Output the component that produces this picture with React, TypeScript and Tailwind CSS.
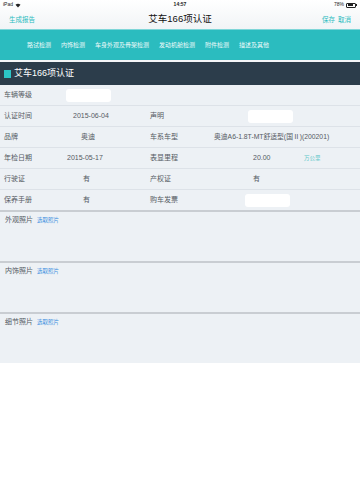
const tabs = ['路试检测', '内饰检测', '车身外观及骨架检测', '发动机舱检测', '附件检测', '描述及其他'];

const Input = ({ className = '' }: { className?: string }) => (
  <div className={`h-[13px] w-[45px] rounded-[3px] bg-white ${className}`} />
);

const Row = ({ children, last }: { children: React.ReactNode; last?: boolean }) => (
  <div className={`flex items-center pt-[1px] text-[7px] text-[#555b63] ${last ? 'h-[20px]' : 'h-[21px] border-b border-[#dde2e8]'}`}>{children}</div>
);

const Photo = ({ label }: { label: string }) => (
  <>
    <div className="h-[2px] bg-[#c9cdd2]" />
    <div className="h-[49px] bg-[#edf1f5] pl-[5px] pt-[2px] flex items-start gap-[4px]">
      <span className="text-[7px] text-[#555b63] leading-[12px]">{label}</span>
      <span className="text-[5.5px] text-[#3b8fe0] leading-[12px]">选取照片</span>
    </div>
  </>
);

export default function App() {
  return (
    <div className="w-[360px] h-[480px] bg-white font-['Liberation_Sans','Noto_Sans_CJK_SC',sans-serif] overflow-hidden">
      <div className="h-[29px] bg-gradient-to-b from-white to-[#f1f4f6]">
        <div className="relative flex h-[10px] items-center justify-between px-[3px] text-[5px] text-[#222]">
          <div className="flex items-center gap-[2px]">
            <span>iPad</span>
            <svg width="6" height="5" viewBox="0 0 12 10"><path d="M6 9 L1 3.5 A7.5 7.5 0 0 1 11 3.5 Z" fill="#222" /></svg>
          </div>
          <span className="absolute left-1/2 -translate-x-1/2 font-bold">14:57</span>
          <div className="flex items-center gap-[2px]">
            <span>78%</span>
            <div className="flex items-center">
              <div className="h-[5px] w-[10px] rounded-[1px] border border-[#222] p-[0.5px]"><div className="h-full w-[75%] bg-[#222]" /></div>
              <div className="h-[2px] w-[1px] bg-[#222]" />
            </div>
          </div>
        </div>
        <div className="relative flex h-[19px] items-center justify-between px-[9px]">
          <span className="text-[6.5px] text-[#2bbcc0]">生成报告</span>
          <span className="absolute left-1/2 -translate-x-1/2 text-[9.5px] text-[#111]">艾车166项认证</span>
          <span className="flex gap-[3px] text-[6.5px] text-[#2bbcc0]"><span>保存</span><span>取消</span></span>
        </div>
      </div>
      <div className="h-[31px] bg-[#2bbcbf] border-t border-[#7fd6d8] flex items-center pl-[27px] gap-[10px] text-[6px] text-[#eefafa]">
        {tabs.map((t) => <span key={t}>{t}</span>)}
      </div>
      <div className="h-[2px] bg-[#f4f6f8]" />
      <div className="h-[23px] bg-[#2c3d4b] flex items-center pl-[4px] gap-[3px]">
        <div className="h-[8px] w-[7px] bg-[#2bc4c6]" />
        <span className="text-[9px] text-white">艾车166项认证</span>
      </div>
      <div className="bg-[#edf1f5]">
        <Row>
          <span className="w-[60px] pl-[4px]">车辆等级</span>
          <Input className="ml-[6px]" />
        </Row>
        <Row>
          <span className="w-[60px] pl-[4px]">认证时间</span>
          <span className="w-[90px] pl-[13px]">2015-06-04</span>
          <span className="w-[60px]">声明</span>
          <Input className="ml-[38px]" />
        </Row>
        <Row>
          <span className="w-[60px] pl-[4px]">品牌</span>
          <span className="w-[90px] pl-[21px]">奥迪</span>
          <span className="w-[60px]">车系车型</span>
          <span className="pl-[4px] text-[6.8px]">奥迪A6-1.8T-MT舒适型(国Ⅱ)(200201)</span>
        </Row>
        <Row>
          <span className="w-[60px] pl-[4px]">年检日期</span>
          <span className="w-[90px] pl-[7px]">2015-05-17</span>
          <span className="w-[60px]">表显里程</span>
          <span className="w-[94px] pl-[43px]">20.00</span>
          <span className="text-[5.5px] text-[#5ec7c9]">万公里</span>
        </Row>
        <Row>
          <span className="w-[60px] pl-[4px]">行驶证</span>
          <span className="w-[90px] pl-[23px]">有</span>
          <span className="w-[60px]">产权证</span>
          <span className="pl-[43px]">有</span>
        </Row>
        <Row last>
          <span className="w-[60px] pl-[4px]">保养手册</span>
          <span className="w-[90px] pl-[23px]">有</span>
          <span className="w-[60px]">购车发票</span>
          <Input className="ml-[35px]" />
        </Row>
      </div>
      <Photo label="外观照片" />
      <Photo label="内饰照片" />
      <Photo label="细节照片" />
    </div>
  );
}
